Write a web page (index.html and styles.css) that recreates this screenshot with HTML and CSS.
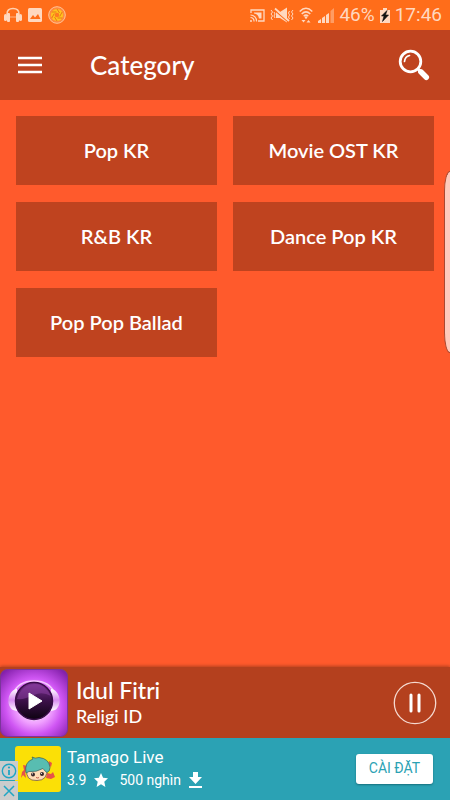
FILE: index.html
```html
<!DOCTYPE html>
<html lang="en">
<head>
<meta charset="utf-8">
<meta name="viewport" content="width=device-width, initial-scale=1">
<title>Category</title>
<link rel="stylesheet" href="styles.css">
</head>
<body>
<div class="status">
  <div class="status-group">
    <svg width="18" height="16" viewBox="0 0 18 16"><path d="M3 10V7C3 3 6 1.500 9 1.500S15 3 15 7v3" fill="none" stroke="#ffd0b0" stroke-width="1.500"/><path d="M6 10h6" stroke="#ffb385"/><rect x="0" y="7" width="3" height="7" rx="1.500" fill="#ffd8c0"/><rect x="3" y="6" width="3" height="9" rx="1" fill="#ffd8c0"/><rect x="12" y="6" width="3" height="9" rx="1" fill="#ffd8c0"/><rect x="15" y="7" width="3" height="7" rx="1.500" fill="#ffd8c0"/></svg>
    <svg width="14" height="14" viewBox="0 0 14 14"><rect width="14" height="14" rx="1.500" fill="#ffd8c0"/><path d="M2 11l3-4 2 2.500L10 6l2.500 5z" fill="#ff6d1a"/></svg>
    <svg width="18" height="18" viewBox="0 0 18 18"><circle cx="9" cy="9" r="8.300" fill="#ff8a3c" stroke="#ffc49a"/><circle cx="9" cy="9" r="6" fill="#ffc41c"/><circle cx="9" cy="9" r="2.300" fill="#ff7a20"/><path d="M9 3l2.500 4M14.200 6l-2.500 4.500M14.200 12H9.500M9 15l-2.500-4M3.800 12l2.500-4.500M3.800 6h4.700" stroke="#e9781a"/></svg>
  </div>
  <div class="status-group status-right">
    <svg width="15" height="13" viewBox="0 0 15 13" fill="none" stroke="#ffd8c0"><path d="M1 4V1h13v11H8" stroke-width="1.300"/><path d="M4 3.500h7.500v6H9C8.500 6.500 7 5 4 4.500z" fill="#ffd8c0" stroke="none"/><path d="M.500 8.500A3.500 3.500 0 0 1 4 12.500M.500 6A6 6 0 0 1 6.500 12.500" stroke-width="1.200"/><circle cx="1" cy="12" r="1" fill="#ffd8c0" stroke="none"/></svg>
    <svg width="24" height="16" viewBox="0 0 24 16"><path d="M6 5h4l7-4.500v15L10 11H6z" fill="#ffd8c0"/><path d="M4 2.800l14 12" stroke="#ff6d1a" stroke-width="1.200"/><path d="M5 1.500l14 12.500" stroke="#ffd8c0" stroke-width="1.800"/><path d="M1 3l1.500 2L1 7l1.500 2L1 11l1.500 2M4 5l1 2-1 2 1 2M23 3l-1.500 2L23 7l-1.500 2L23 11l-1.500 2M19.500 4l-1 2 1 2-1 2 1 2" fill="none" stroke="#ffd8c0"/></svg>
    <svg width="14" height="16" viewBox="0 0 14 16"><path d="M.700 4.500Q7-1.800 13.300 4.500M2.700 7Q7 2.800 11.300 7M4.700 9.200Q7 7 9.300 9.200" fill="none" stroke="#ffd8c0" stroke-width="1.500"/><circle cx="7" cy="10.500" r="1.200" fill="#ffd8c0"/><path d="M2.500 13h4l-2 2.500zM7.500 15.500h4l-2-2.500z" fill="#ffd8c0"/></svg>
    <svg width="16" height="15" viewBox="0 0 16 15"><path d="M0 15v-2l3-2v4zM4 15v-5l3-2v7zM8 15V7l3-2v10z" fill="#ffd8c0"/><path d="M12.500 15V3L16 0v15z" fill="#ff9c63"/></svg>
    <span class="status-text">46%</span>
    <svg width="10" height="15" viewBox="0 0 10 15"><path d="M3 0h4v2h3v13H0V2h3z" fill="#ffd8c0"/><path d="M7 2.500L1.500 8H4l-1.500 5.500L8.500 7H5.500z" fill="#111" stroke="#111" stroke-width=".6"/></svg>
    <span class="status-text">17:46</span>
  </div>
</div>
<header class="header">
  <button class="icon-button" aria-label="Menu"><svg width="24" height="18" viewBox="0 0 24 18"><path d="M0 2h24M0 9h24M0 16h24" stroke="#fff" stroke-width="2.300"/></svg></button>
  <h1 class="title">Category</h1>
  <button class="icon-button" aria-label="Search"><svg width="32" height="32" viewBox="0 0 32 32" fill="none" stroke="#fff"><circle cx="12.500" cy="12.500" r="10.300" stroke-width="2.800"/><path d="M6.500 12.500Q7 7.500 11.500 6.500" stroke-width="1.700" stroke-linecap="round"/><path d="M19.500 19.500l3 3" stroke-width="2.500"/><path d="M22.800 22.800l5.500 5.500" stroke-width="5.500" stroke-linecap="round"/></svg></button>
</header>
<main class="content">
  <div class="categories">
    <button class="category">Pop KR</button>
    <button class="category">Movie OST KR</button>
    <button class="category">R&amp;B KR</button>
    <button class="category">Dance Pop KR</button>
    <button class="category">Pop Pop Ballad</button>
  </div>
  <div class="edge-panel"></div>
</main>
<section class="player">
  <svg width="68" height="68" viewBox="0 0 68 68">
    <defs>
      <radialGradient id="glow" cx=".5" cy=".55" r=".68"><stop offset="0" stop-color="#fff"/><stop offset=".38" stop-color="#f0a0ff"/><stop offset=".62" stop-color="#cf55f3"/><stop offset="1" stop-color="#8420ab"/></radialGradient>
      <linearGradient id="disc" x2="0" y2="1"><stop offset="0" stop-color="#7c3292"/><stop offset=".5" stop-color="#3b1048"/><stop offset="1" stop-color="#0d0210"/></linearGradient>
      <linearGradient id="pad" x2="0" y2="1"><stop offset="0" stop-color="#fff"/><stop offset=".5" stop-color="#d98cf0"/><stop offset="1" stop-color="#fff"/></linearGradient>
    </defs>
    <rect x=".5" y=".5" width="67" height="67" rx="7" fill="url(#glow)" stroke="#7b359b"/>
    <path d="M13 25Q18 12 34 12t21 13" fill="none" stroke="#f6c8ff" stroke-width="1.500"/>
    <path d="M16 20C7 23 6 37 13 41l4 1V20zM52 20c9 3 10 17 3 21l-4 1V20z" fill="url(#pad)"/>
    <path d="M19 45Q34 58 49 45" fill="#fbe4ff"/>
    <circle cx="34" cy="32" r="18.500" fill="url(#disc)" stroke="#3a0b49" stroke-width="1.500"/>
    <path d="M17 30Q21 16 35 15q10 0 16 12-9-5-17-1-10 5-17 4z" fill="#8f42a6" opacity=".5"/>
    <path d="M29 24l13 8-13 8z" fill="#fff" stroke="#fff" stroke-linejoin="round"/>
  </svg>
  <div class="track">
    <div class="track-title">Idul Fitri</div>
    <div class="track-artist">Religi ID</div>
  </div>
  <button class="icon-button" aria-label="Pause"><svg width="44" height="44" viewBox="0 0 44 44"><circle cx="22" cy="22" r="20.700" fill="none" stroke="#f5d9d0" stroke-width="1.300"/><path d="M18 14v16M26 14v16" stroke="#fff" stroke-width="3" stroke-linecap="round"/></svg></button>
</section>
<aside class="ad">
  <div class="ad-controls">
    <button class="ad-control" aria-label="Ad information"><svg width="16" height="16" viewBox="0 0 16 16"><circle cx="8" cy="8" r="6.700" fill="none" stroke="#20a5c4" stroke-width="1.400"/><path d="M8 7v5" stroke="#20a5c4" stroke-width="1.800"/><circle cx="8" cy="4.500" r="1.100" fill="#20a5c4"/></svg></button>
    <button class="ad-control" aria-label="Close ad"><svg width="14" height="14" viewBox="0 0 14 14"><path d="M2 2l10 10M12 2L2 12" stroke="#20a5c4" stroke-width="1.500"/></svg></button>
  </div>
  <svg width="46" height="46" viewBox="0 0 46 46">
    <rect width="46" height="46" rx="3" fill="#fbe006"/>
    <path d="M8 19l5 1 1 4-4 2 1 6-3-3-2 3 1-6 2-2zM33 18l1-3 3 2-1 4zM32 27l4 1 2-2 2 5-4 2-5-1z" fill="#e65348"/>
    <path d="M12 23Q10 35 22 34.500q11 0 10-12.500-10-6-20 1z" fill="#ffdcb7" stroke="#604646" stroke-width=".7"/>
    <path d="M11 27Q9 16 18 13l-1-2q3 2 7 .5 10 1 11 10 0 4-3 5-2-1-4-4-7 4-14 3-2 1-3 1.500z" fill="#58bdb1" stroke="#385e5d" stroke-width=".7"/>
    <circle cx="18" cy="28.500" r="2" fill="#38272a"/><circle cx="27" cy="28" r="2" fill="#38272a"/><circle cx="17.500" cy="27.800" r=".6" fill="#fff"/><circle cx="26.500" cy="27.300" r=".6" fill="#fff"/>
    <path d="M21 31.500q2 1 3 0" fill="none" stroke="#b43d34" stroke-width=".8"/>
  </svg>
  <div class="ad-body">
    <div class="ad-title">Tamago Live</div>
    <div class="ad-stats">
      <span>3.9</span>
      <svg width="14" height="14" viewBox="0 0 14 14"><path d="M7 0l2.100 4.800 4.900.5-3.700 3.400L11.400 14 7 11.200 2.600 14l1.100-5.300L0 5.300l4.900-.5z" fill="#fff"/></svg>
      <span class="downloads">500 nghìn</span>
      <svg width="13" height="16" viewBox="0 0 13 16"><path d="M4 0h5v5h4l-6.500 7L0 5h4zM0 14h13v2H0z" fill="#fff"/></svg>
    </div>
  </div>
  <button class="install">CÀI ĐẶT</button>
</aside>
</body>
</html>
```
FILE: styles.css
```css
* { box-sizing: border-box; }
body {
  margin: 0;
  min-height: 100vh;
  display: flex;
  flex-direction: column;
  background: #ff5a2c;
  color: #fff;
  font-family: Lato, "Liberation Sans", sans-serif;
}
svg { display: block; flex: none; }
button {
  margin: 0;
  padding: 0;
  border: 0;
  background: none;
  color: inherit;
  font: inherit;
}
.status {
  display: flex;
  justify-content: space-between;
  align-items: center;
  height: 30px;
  padding: 0 8px 0 4px;
  background: #ff6d1a;
  color: #ffd8c0;
}
.status-group { display: flex; align-items: center; gap: 6px; }
.status-right { gap: 5px; }
.status-text { font: 19px/30px Roboto, sans-serif; }
.header {
  display: flex;
  align-items: center;
  height: 70px;
  padding: 0 20px 0 18px;
  background: #bf431f;
}
.title {
  flex: 1;
  margin: 0;
  padding-left: 48px;
  font-size: 26px;
  font-weight: 500;
  line-height: 32px;
}
.content {
  position: relative;
  flex: 1;
  padding: 16px;
}
.categories {
  display: grid;
  grid-template-columns: 1fr 1fr;
  gap: 17px 16px;
}
.category {
  height: 69px;
  padding-bottom: 2px;
  background: #bf431f;
  font-size: 20px;
  font-weight: 600;
}
.edge-panel {
  position: absolute;
  top: 71px;
  right: 0;
  width: 6px;
  height: 182px;
  border: 1px solid #a84a32;
  border-right: 0;
  border-radius: 6px 0 0 6px / 20px 0 0 20px;
  background: #ffcabb;
}
.player {
  display: flex;
  align-items: center;
  height: 71px;
  padding: 0 13px 0 0;
  background: #b4401e;
  box-shadow: 0 -1px 3px #b4401e;
}
.track { flex: 1; padding: 0 0 2px 8px; }
.track-title { font-size: 23px; font-weight: 500; line-height: 28px; }
.track-artist { font-size: 18px; font-weight: 500; line-height: 24px; }
.ad {
  position: relative;
  display: flex;
  align-items: center;
  height: 62px;
  padding: 0 17px 0 15px;
  background: #2ba2b4;
  font-family: Roboto, sans-serif;
}
.ad-controls {
  position: absolute;
  left: 0;
  bottom: 0;
  display: grid;
  gap: 1px;
}
.ad-control {
  display: grid;
  place-items: center;
  width: 18px;
  height: 19px;
  background: #cbcccc;
}
.ad-body { flex: 1; padding: 0 0 2px 6px; }
.ad-title { font-size: 17px; line-height: 24px; }
.ad-stats {
  display: flex;
  align-items: center;
  gap: 8px;
  font-size: 14px;
  line-height: 22px;
}
.downloads { padding-left: 3px; }
.install {
  width: 77px;
  height: 30px;
  padding-bottom: 2px;
  border-radius: 3px;
  background: #fff;
  box-shadow: 0 1px 2px #176e7d;
  color: #2ba2b4;
  font-size: 14px;
}
```
